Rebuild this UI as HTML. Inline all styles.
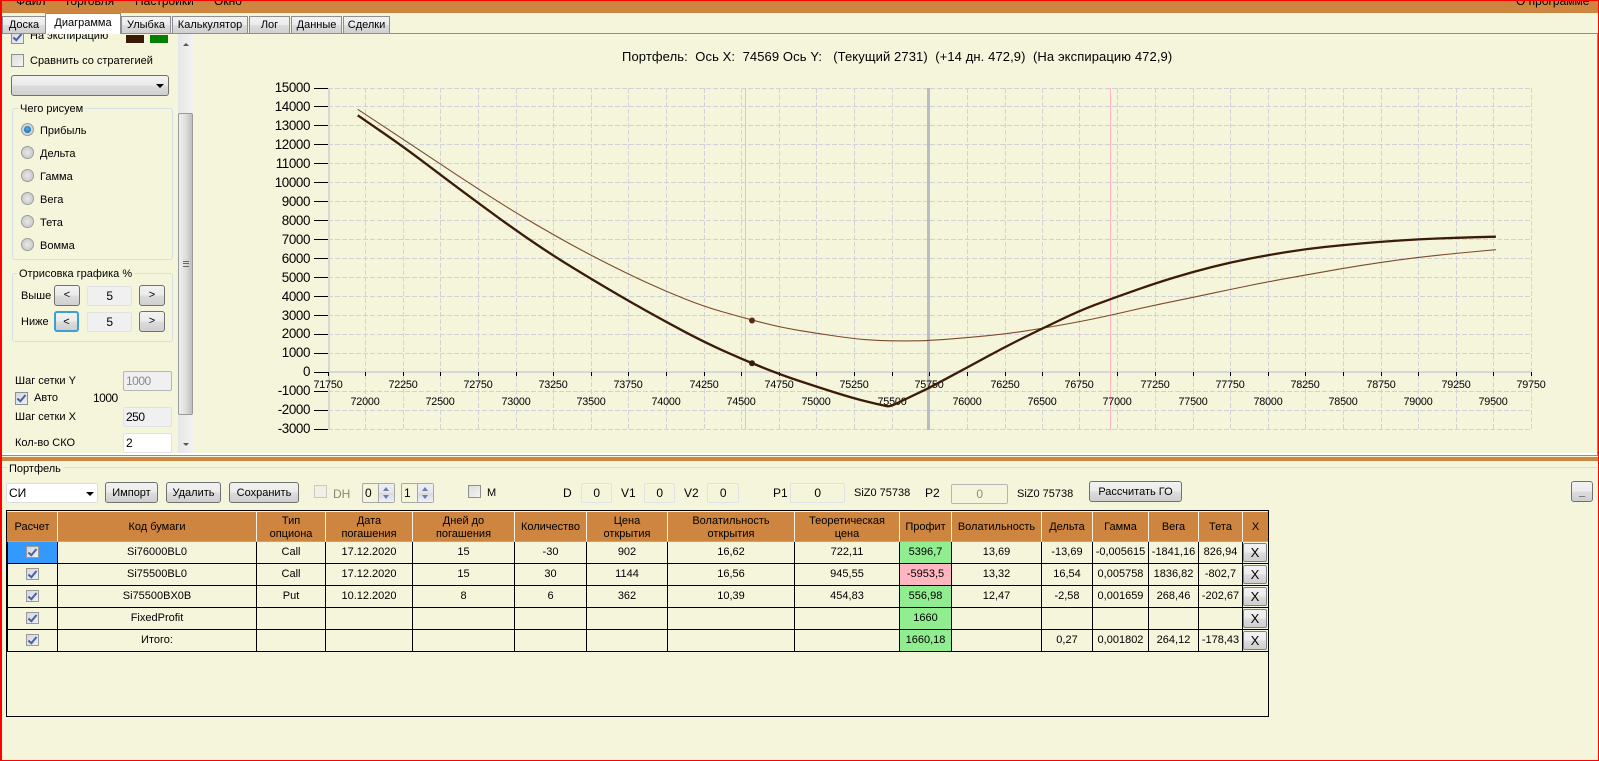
<!DOCTYPE html>
<html lang="ru"><head><meta charset="utf-8"><title>Диаграмма</title>
<style>
html,body{margin:0;padding:0;background:#f5f5dc}
body{width:1599px;height:761px;position:relative;overflow:hidden;font:11px/14px "Liberation Sans","Noto Sans CJK SC",sans-serif;color:#000}
.a,.t,.b,.i,.cb,.r,.g{position:absolute;box-sizing:border-box}
.t{white-space:pre;height:14px}
.b{border:1px solid #707070;border-radius:3px;background:linear-gradient(#f2f2f2 0,#ebebeb 49%,#ddd 50%,#cfcfcf 100%);text-align:center;white-space:pre}
.i{border:1px solid #dfe3e6;border-radius:2px;text-align:center;background:#f5f5dc}
.n{font-size:12px;letter-spacing:-.5px;line-height:18px}
.cb{width:13px;height:13px;border:1px solid #8e8f8f;background:linear-gradient(135deg,#dcdcdc,#f4f4f4)}
.cb.on{background:linear-gradient(135deg,#d4d8dd,#eef0f2)}
.cb.on::after{content:"";position:absolute;left:3px;top:0;width:3px;height:7px;border:solid #4a5fa8;border-width:0 2px 2px 0;transform:rotate(40deg)}
.r{width:13px;height:13px;border-radius:50%;border:1px solid #9a9a9a;background:radial-gradient(circle at 50% 50%,#e8e8e8 0,#d0d0d0 60%,#eee 100%)}
.r.on::after{content:"";position:absolute;left:2px;top:2px;width:7px;height:7px;border-radius:50%;background:radial-gradient(circle at 50% 40%,#4db0e8,#0b5a9a)}
.g{border:1px solid #d5dfe5;border-radius:3px}
.tri{position:absolute;width:0;height:0;border-left:4px solid transparent;border-right:4px solid transparent;border-top:4px solid #000}
.tab{position:absolute;top:16px;height:17px;box-sizing:border-box;border:1px solid #8c8e94;border-bottom:0;background:linear-gradient(#f2f2f2 0,#ebebeb 49%,#ddd 50%,#cfcfcf 100%);text-align:center;line-height:17px}
table{border-collapse:separate;border-spacing:0;table-layout:fixed;position:absolute;left:0;top:1px;width:1261px}
th{height:30px;box-sizing:border-box;background:#cd853f;font-weight:400;line-height:13px;border-right:1px solid #f5f0e0;border-bottom:1px solid #a9a9a9;padding:2px 0 0 0;text-align:center;overflow:hidden}
td{height:22px;box-sizing:border-box;border-right:1px solid #000;border-bottom:1px solid #000;text-align:center;padding:0;position:relative;line-height:21px;overflow:hidden}
td:first-child{border-left:1px solid #000}
th:last-child,td:last-child{border-right:0}
td .cb{left:18px;top:4px;width:13px;height:12px;border-color:#999}
.x{position:absolute;left:0;top:1px;width:24px;height:19px;box-sizing:border-box;border:1px solid #808080;border-radius:2px;background:linear-gradient(#f2f2f2 0,#ebebeb 49%,#ddd 50%,#cfcfcf 100%);font-size:13px;line-height:17px}
.gr{background:#90ee90}.pk{background:#ffb6c1}
svg text{font-family:"Liberation Sans",sans-serif;fill:#000}
.yl{font-size:13.4px;text-anchor:end;letter-spacing:-.4px}
.xl{font-size:10.8px;text-anchor:middle;letter-spacing:-.2px}
</style></head><body>

<!-- menu -->
<div class="a" style="left:0;top:0;width:1599px;height:13px;background:#cd853f;overflow:hidden;font-size:12px">
<span class="t" style="left:16px;top:-6px">Файл</span>
<span class="t" style="left:64px;top:-6px">Торговля</span>
<span class="t" style="left:135px;top:-6px">Настройки</span>
<span class="t" style="left:214px;top:-6px">Окно</span>
<span class="t" style="left:1516px;top:-6px">О программе</span>
</div>

<!-- panel -->
<div class="a" style="left:1px;top:33px;width:1597px;height:423px;border:1px solid #8c8e94;border-left-color:#a0a0a0;outline:0;box-shadow:inset 0 -2px 0 #fff"></div>

<!-- tabs -->
<div class="tab" style="left:2px;width:44px">Доска</div>
<div class="tab" style="left:121px;width:50px">Улыбка</div>
<div class="tab" style="left:172px;width:76px">Калькулятор</div>
<div class="tab" style="left:249px;width:41px">Лог</div>
<div class="tab" style="left:291px;width:51px">Данные</div>
<div class="tab" style="left:343px;width:47px">Сделки</div>
<div class="tab" style="left:45px;top:13px;width:76px;height:21px;background:#fff;line-height:18px">Диаграмма</div>

<!-- left panel -->
<div class="a" style="left:2px;top:34px;width:176px;height:419px;overflow:hidden">
<div class="cb on" style="left:9px;top:-3px"></div>
<span class="t" style="left:28px;top:-5px">На экспирацию</span>
<div class="a" style="left:124px;top:1px;width:18px;height:8px;background:#3a1a05"></div>
<div class="a" style="left:148px;top:1px;width:18px;height:8px;background:#008000"></div>
<div class="cb" style="left:9px;top:20px"></div>
<span class="t" style="left:28px;top:20px">Сравнить со стратегией</span>
<div class="b" style="left:9px;top:41px;width:158px;height:21px"><div class="tri" style="left:144px;top:8px"></div></div>

<div class="g" style="left:10px;top:74px;width:161px;height:152px"></div>
<span class="t" style="left:16px;top:68px;background:#f5f5dc;padding:0 2px">Чего рисуем</span>
<div class="r on" style="left:19px;top:89px"></div><span class="t" style="left:38px;top:90px">Прибыль</span>
<div class="r" style="left:19px;top:112px"></div><span class="t" style="left:38px;top:113px">Дельта</span>
<div class="r" style="left:19px;top:135px"></div><span class="t" style="left:38px;top:136px">Гамма</span>
<div class="r" style="left:19px;top:158px"></div><span class="t" style="left:38px;top:159px">Вега</span>
<div class="r" style="left:19px;top:181px"></div><span class="t" style="left:38px;top:182px">Тета</span>
<div class="r" style="left:19px;top:204px"></div><span class="t" style="left:38px;top:205px">Вомма</span>

<div class="g" style="left:10px;top:239px;width:161px;height:69px"></div>
<span class="t" style="left:15px;top:233px;background:#f5f5dc;padding:0 2px">Отрисовка графика %</span>
<span class="t" style="left:19px;top:255px">Выше</span>
<div class="b" style="left:52px;top:251px;width:26px;height:21px;line-height:19px">&lt;</div>
<div class="i n" style="left:85px;top:252px;width:45px;height:20px;background:#f0f0f0">5</div>
<div class="b" style="left:137px;top:251px;width:26px;height:21px;line-height:19px">&gt;</div>
<span class="t" style="left:19px;top:281px">Ниже</span>
<div class="b" style="left:52px;top:277px;width:25px;height:21px;line-height:18px;border:2px solid #3c9fd8">&lt;</div>
<div class="i n" style="left:85px;top:278px;width:45px;height:20px;background:#f0f0f0">5</div>
<div class="b" style="left:137px;top:277px;width:26px;height:21px;line-height:19px">&gt;</div>

<span class="t" style="left:13px;top:340px">Шаг сетки Y</span>
<div class="i n" style="left:121px;top:337px;width:49px;height:20px;background:#f0f0f0;border-color:#b5b5b5;color:#8a8a8a;text-align:left;padding-left:2px">1000</div>
<div class="cb on" style="left:13px;top:358px"></div>
<span class="t" style="left:32px;top:357px">Авто</span>
<span class="t n" style="left:91px;top:357px;line-height:14px">1000</span>
<span class="t" style="left:13px;top:376px">Шаг сетки X</span>
<div class="i n" style="left:121px;top:373px;width:49px;height:20px;background:#f0f0f0;text-align:left;padding-left:2px">250</div>
<span class="t" style="left:13px;top:402px">Кол-во СКО</span>
<div class="i n" style="left:121px;top:399px;width:49px;height:20px;background:#fff;text-align:left;padding-left:2px">2</div>
</div>

<!-- scrollbar -->
<div class="a" style="left:178px;top:34px;width:15px;height:419px;background:linear-gradient(90deg,#e6e6e6,#f2f2f2)"></div>
<div class="a" style="left:183px;top:43px;width:0;height:0;border-left:3px solid transparent;border-right:3px solid transparent;border-bottom:3px solid #555"></div>
<div class="a" style="left:178px;top:113px;width:15px;height:302px;border:1px solid #9a9a9a;border-radius:2px;box-sizing:border-box;background:linear-gradient(90deg,#f0f0f0,#dcdcdc 55%,#bdbdbd)"></div>
<div class="a" style="left:183px;top:261px;width:6px;height:6px;border-top:1px solid #666;border-bottom:1px solid #666;box-sizing:border-box"></div>
<div class="a" style="left:183px;top:263px;width:6px;height:1px;background:#666"></div>
<div class="a" style="left:183px;top:443px;width:0;height:0;border-left:3px solid transparent;border-right:3px solid transparent;border-top:3px solid #555"></div>

<!-- chart -->
<span class="t" style="left:622px;top:50px;font-size:13px;letter-spacing:.1px">Портфель:  Ось X:  74569 Ось Y:   (Текущий 2731)  (+14 дн. 472,9)  (На экспирацию 472,9)</span>
<svg class="a" style="left:0;top:0" width="1599" height="761" viewBox="0 0 1599 761">
<g stroke="#d2d2d6" stroke-width="1" stroke-dasharray="5 2" shape-rendering="crispEdges" fill="none">
<path d="M365.5 88V429M403.5 88V429M440.5 88V429M478.5 88V429M516.5 88V429M553.5 88V429M591.5 88V429M628.5 88V429M666.5 88V429M704.5 88V429M741.5 88V429M779.5 88V429M816.5 88V429M854.5 88V429M892.5 88V429M929.5 88V429M967.5 88V429M1005.5 88V429M1042.5 88V429M1079.5 88V429M1117.5 88V429M1155.5 88V429M1193.5 88V429M1230.5 88V429M1268.5 88V429M1305.5 88V429M1343.5 88V429M1381.5 88V429M1418.5 88V429M1456.5 88V429M1493.5 88V429M1531.5 88V429"/>
<path d="M328 88.5H1532M328 106.5H1532M328 125.5H1532M328 144.5H1532M328 163.5H1532M328 182.5H1532M328 201.5H1532M328 220.5H1532M328 239.5H1532M328 258.5H1532M328 277.5H1532M328 296.5H1532M328 315.5H1532M328 334.5H1532M328 353.5H1532M328 391.5H1532M328 410.5H1532M328 429.5H1532"/>
</g>
<g shape-rendering="crispEdges">
<rect x="328" y="88" width="2" height="342" fill="#d6d6d6"/>
<rect x="328" y="371" width="1204" height="2" fill="#d6d6d6"/>
<rect x="745" y="88" width="1" height="342" fill="#ffb6c1"/>
<rect x="1110" y="88" width="1" height="342" fill="#ffb6c1"/>
<rect x="927" y="88" width="3" height="342" fill="#b9bcc0"/>
<path stroke="#000" fill="none" d="M314 88.5H328M314 106.5H328M314 125.5H328M314 144.5H328M314 163.5H328M314 182.5H328M314 201.5H328M314 220.5H328M314 239.5H328M314 258.5H328M314 277.5H328M314 296.5H328M314 315.5H328M314 334.5H328M314 353.5H328M314 372.5H328M314 391.5H328M314 410.5H328M314 429.5H328"/>
<path stroke="#000" fill="none" d="M328.5 372V376M365.5 372V376M403.5 372V376M440.5 372V376M478.5 372V376M516.5 372V376M553.5 372V376M591.5 372V376M628.5 372V376M666.5 372V376M704.5 372V376M741.5 372V376M779.5 372V376M816.5 372V376M854.5 372V376M892.5 372V376M929.5 372V376M967.5 372V376M1005.5 372V376M1042.5 372V376M1079.5 372V376M1117.5 372V376M1155.5 372V376M1193.5 372V376M1230.5 372V376M1268.5 372V376M1305.5 372V376M1343.5 372V376M1381.5 372V376M1418.5 372V376M1456.5 372V376M1493.5 372V376M1531.5 372V376"/>
</g>
<g transform="translate(0,-1)">
<text class="yl" x="310" y="93">15000</text><text class="yl" x="310" y="112">14000</text><text class="yl" x="310" y="131">13000</text><text class="yl" x="310" y="150">12000</text><text class="yl" x="310" y="169">11000</text><text class="yl" x="310" y="188">10000</text><text class="yl" x="310" y="207">9000</text><text class="yl" x="310" y="226">8000</text><text class="yl" x="310" y="245">7000</text><text class="yl" x="310" y="264">6000</text><text class="yl" x="310" y="283">5000</text><text class="yl" x="310" y="302">4000</text><text class="yl" x="310" y="321">3000</text><text class="yl" x="310" y="339">2000</text><text class="yl" x="310" y="358">1000</text><text class="yl" x="310" y="377">0</text><text class="yl" x="310" y="396">-1000</text><text class="yl" x="310" y="415">-2000</text><text class="yl" x="310" y="434">-3000</text>
</g>
<g>
<text class="xl" x="328" y="388">71750</text><text class="xl" x="403" y="388">72250</text><text class="xl" x="478" y="388">72750</text><text class="xl" x="553" y="388">73250</text><text class="xl" x="628" y="388">73750</text><text class="xl" x="704" y="388">74250</text><text class="xl" x="779" y="388">74750</text><text class="xl" x="854" y="388">75250</text><text class="xl" x="929" y="388">75750</text><text class="xl" x="1005" y="388">76250</text><text class="xl" x="1079" y="388">76750</text><text class="xl" x="1155" y="388">77250</text><text class="xl" x="1230" y="388">77750</text><text class="xl" x="1305" y="388">78250</text><text class="xl" x="1381" y="388">78750</text><text class="xl" x="1456" y="388">79250</text><text class="xl" x="1531" y="388">79750</text>
<text class="xl" x="365" y="405">72000</text><text class="xl" x="440" y="405">72500</text><text class="xl" x="516" y="405">73000</text><text class="xl" x="591" y="405">73500</text><text class="xl" x="666" y="405">74000</text><text class="xl" x="741" y="405">74500</text><text class="xl" x="816" y="405">75000</text><text class="xl" x="892" y="405">75500</text><text class="xl" x="967" y="405">76000</text><text class="xl" x="1042" y="405">76500</text><text class="xl" x="1117" y="405">77000</text><text class="xl" x="1193" y="405">77500</text><text class="xl" x="1268" y="405">78000</text><text class="xl" x="1343" y="405">78500</text><text class="xl" x="1418" y="405">79000</text><text class="xl" x="1493" y="405">79500</text>
</g>
<path fill="none" stroke="#7a4b2c" stroke-width="1.1" stroke-linejoin="round" d="M357.7 109.3L380.5 124.3Q403.3 139.3 422 151.8Q440.7 164.3 459.7 176.8Q478.7 189.3 497.7 201.3Q516.7 213.3 535.2 224.15Q553.7 235 572.7 245.35Q591.7 255.7 610.2 265Q628.7 274.3 647.7 283Q666.7 291.7 685.7 299.2Q704.7 306.7 723.2 312Q741.7 317.3 760.85 322.3Q780 327.3 798.35 330.3Q816.7 333.3 835 336Q853.3 338.7 866.65 339.7Q880 340.7 892.5 340.85Q905 341 916.6 340.85Q928.2 340.7 947.9 339.2Q967.6 337.7 986.5 335.85Q1005.4 334 1024.05 331.15Q1042.7 328.3 1061.2 325Q1079.7 321.7 1095.15 318.5Q1110.6 315.3 1132.9 310.15Q1155.2 305 1174.3 301.15Q1193.4 297.3 1212.1 293.3Q1230.8 289.3 1249.65 285.5Q1268.5 281.7 1287.2 278.35Q1305.9 275 1324.55 271.65Q1343.2 268.3 1362.1 265.3Q1381 262.3 1399.7 259.8Q1418.4 257.3 1437.45 255.3Q1456.5 253.3 1476.2 251.5L1495.9 249.7"/>
<path fill="none" stroke="#3a1c08" stroke-width="2.3" stroke-linejoin="round" d="M357.7 115.3L380.5 131Q403.3 146.7 422 160.85Q440.7 175 459.7 189.15Q478.7 203.3 497.7 217.15Q516.7 231 535.2 243.5Q553.7 256 572.7 267.65Q591.7 279.3 610.2 290.15Q628.7 301 647.7 311.65Q666.7 322.3 685.7 332.3Q704.7 342.3 723.2 350.65Q741.7 359 760.85 366.75Q780 374.5 798.35 380.6Q816.7 386.7 835 392.5Q853.3 398.3 868.15 401.9Q880 404.8 886 406Q889.5 406.8 893.3 405L928.2 388.3L947.9 377.8Q967.6 367.3 986.5 357Q1005.4 346.7 1024.05 337.5Q1042.7 328.3 1061.2 319.5Q1079.7 310.7 1095.15 304.85Q1110.6 299 1132.9 291.15Q1155.2 283.3 1174.3 277.5Q1193.4 271.7 1212.1 267Q1230.8 262.3 1249.65 258.65Q1268.5 255 1287.2 252Q1305.9 249 1324.55 247Q1343.2 245 1362.1 243.35Q1381 241.7 1399.7 240.5Q1418.4 239.3 1437.45 238.5Q1456.5 237.7 1476.2 237.2L1495.9 236.7"/>
<circle cx="752" cy="320.5" r="3" fill="#5a2a14"/>
<circle cx="752" cy="363.3" r="3" fill="#3a1c08"/>
</svg>

<!-- splitter -->
<div class="a" style="left:1px;top:457px;width:1597px;height:4px;background:#cd853f"></div>

<!-- portfolio -->
<div class="a" style="left:2px;top:467px;width:1595px;height:1px;background:#dcdcdc"></div>
<span class="t" style="left:7px;top:462px;background:#f5f5dc;padding:0 2px">Портфель</span>

<div class="i n" style="left:6px;top:483px;width:92px;height:20px;background:#fff;border-color:#dcdfe2;text-align:left;padding-left:2px;letter-spacing:0">СИ<div class="tri" style="left:79px;top:8px"></div></div>
<div class="b" style="left:105px;top:482px;width:53px;height:21px;line-height:21px">Импорт</div>
<div class="b" style="left:166px;top:482px;width:55px;height:21px;line-height:21px">Удалить</div>
<div class="b" style="left:229px;top:482px;width:70px;height:21px;line-height:21px">Сохранить</div>
<div class="cb" style="left:314px;top:485px;border-color:#c8c8c8;background:#f0f0e4"></div>
<span class="t" style="left:333px;top:487px;color:#8a8a70;font-size:12px">DH</span>

<div class="i n" style="left:362px;top:483px;width:33px;height:20px;border-color:#a8a8a8;text-align:left;padding-left:2px">0
<div class="a" style="left:15px;top:0;width:16px;height:18px;background:linear-gradient(#eef0f4 0,#e4e6ec 49%,#d6d9e2 50%,#eef0f4 100%);border-left:1px solid #a8a8a8"></div>
<div class="a" style="left:20px;top:3px;width:0;height:0;border-left:3px solid transparent;border-right:3px solid transparent;border-bottom:4px solid #6a7ab0"></div>
<div class="a" style="left:20px;top:11px;width:0;height:0;border-left:3px solid transparent;border-right:3px solid transparent;border-top:4px solid #6a7ab0"></div></div>
<div class="i n" style="left:401px;top:483px;width:33px;height:20px;border-color:#a8a8a8;text-align:left;padding-left:2px">1
<div class="a" style="left:15px;top:0;width:16px;height:18px;background:linear-gradient(#eef0f4 0,#e4e6ec 49%,#d6d9e2 50%,#eef0f4 100%);border-left:1px solid #a8a8a8"></div>
<div class="a" style="left:20px;top:3px;width:0;height:0;border-left:3px solid transparent;border-right:3px solid transparent;border-bottom:4px solid #6a7ab0"></div>
<div class="a" style="left:20px;top:11px;width:0;height:0;border-left:3px solid transparent;border-right:3px solid transparent;border-top:4px solid #6a7ab0"></div></div>

<div class="cb" style="left:468px;top:485px"></div>
<span class="t" style="left:487px;top:486px">M</span>
<span class="t" style="left:563px;top:486px;font-size:12px">D</span>
<div class="i n" style="left:581px;top:483px;width:31px;height:20px">0</div>
<span class="t" style="left:621px;top:486px;font-size:12px">V1</span>
<div class="i n" style="left:644px;top:483px;width:31px;height:20px">0</div>
<span class="t" style="left:684px;top:486px;font-size:12px">V2</span>
<div class="i n" style="left:707px;top:483px;width:32px;height:20px">0</div>
<span class="t" style="left:773px;top:486px;font-size:12px">P1</span>
<div class="i n" style="left:790px;top:483px;width:55px;height:20px">0</div>
<span class="t" style="left:854px;top:486px">SiZ0 75738</span>
<span class="t" style="left:925px;top:486px;font-size:12px">P2</span>
<div class="i n" style="left:951px;top:484px;width:57px;height:20px;border-color:#b5b5b5;color:#8a8a8a">0</div>
<span class="t" style="left:1017px;top:487px">SiZ0 75738</span>
<div class="b" style="left:1089px;top:481px;width:93px;height:21px;line-height:21px">Рассчитать ГО</div>
<div class="b" style="left:1571px;top:481px;width:22px;height:21px;line-height:20px;font-weight:700">_</div>

<!-- grid -->
<div class="a" style="left:6px;top:510px;width:1263px;height:207px;border:1px solid #000">
<table>
<colgroup><col style="width:51px"><col style="width:199px"><col style="width:69px"><col style="width:87px"><col style="width:102px"><col style="width:72px"><col style="width:81px"><col style="width:127px"><col style="width:105px"><col style="width:52px"><col style="width:90px"><col style="width:51px"><col style="width:56px"><col style="width:50px"><col style="width:44px"><col style="width:25px"></colgroup>
<tr><th>Расчет</th><th>Код бумаги</th><th>Тип<br>опциона</th><th>Дата<br>погашения</th><th>Дней до<br>погашения</th><th>Количество</th><th>Цена<br>открытия</th><th>Волатильность<br>открытия</th><th>Теоретическая<br>цена</th><th>Профит</th><th>Волатильность</th><th>Дельта</th><th>Гамма</th><th>Вега</th><th>Тета</th><th>X</th></tr>
<tr><td style="background:#3399ff"><div class="cb on"></div></td><td>Si76000BL0</td><td>Call</td><td>17.12.2020</td><td>15</td><td>-30</td><td>902</td><td>16,62</td><td>722,11</td><td class="gr">5396,7</td><td>13,69</td><td>-13,69</td><td>-0,005615</td><td>-1841,16</td><td>826,94</td><td><div class="x">X</div></td></tr>
<tr><td><div class="cb on"></div></td><td>Si75500BL0</td><td>Call</td><td>17.12.2020</td><td>15</td><td>30</td><td>1144</td><td>16,56</td><td>945,55</td><td class="pk">-5953,5</td><td>13,32</td><td>16,54</td><td>0,005758</td><td>1836,82</td><td>-802,7</td><td><div class="x">X</div></td></tr>
<tr><td><div class="cb on"></div></td><td>Si75500BX0B</td><td>Put</td><td>10.12.2020</td><td>8</td><td>6</td><td>362</td><td>10,39</td><td>454,83</td><td class="gr">556,98</td><td>12,47</td><td>-2,58</td><td>0,001659</td><td>268,46</td><td>-202,67</td><td><div class="x">X</div></td></tr>
<tr><td><div class="cb on"></div></td><td>FixedProfit</td><td></td><td></td><td></td><td></td><td></td><td></td><td></td><td class="gr">1660</td><td></td><td></td><td></td><td></td><td></td><td><div class="x">X</div></td></tr>
<tr><td><div class="cb on"></div></td><td>Итого:</td><td></td><td></td><td></td><td></td><td></td><td></td><td></td><td class="gr">1660,18</td><td></td><td>0,27</td><td>0,001802</td><td>264,12</td><td>-178,43</td><td><div class="x">X</div></td></tr>
</table>
</div>

<!-- red window frame -->
<div class="a" style="left:0;top:0;width:1599px;height:761px;border:1px solid #f00;border-left-width:2px;pointer-events:none"></div>
</body></html>
